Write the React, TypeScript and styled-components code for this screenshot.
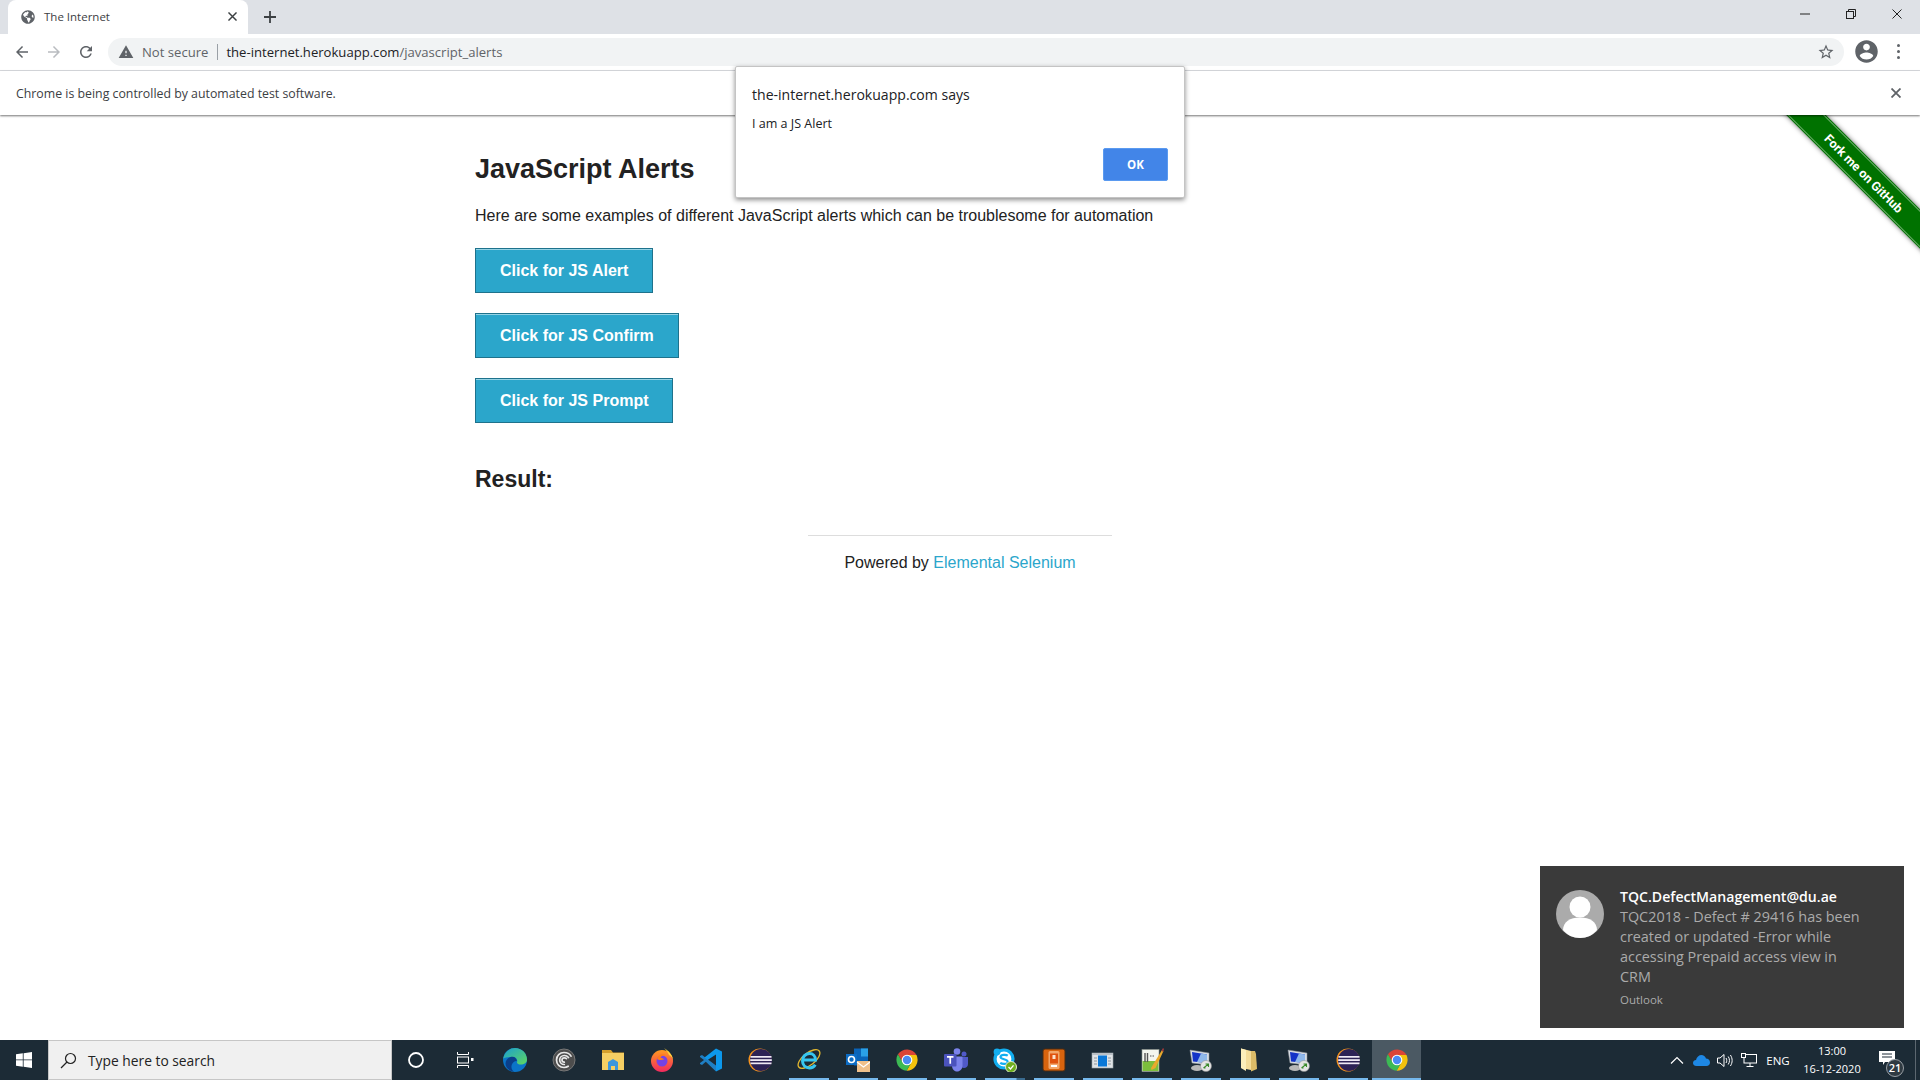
import React from "react";
import styled, { createGlobalStyle } from "styled-components";
import { FaGlobeAmericas } from "react-icons/fa";

const uiFont = `"Open Sans", "Noto Sans", sans-serif`;
const pageFont = `"Liberation Sans", Arial, sans-serif`;

const GlobalStyle = createGlobalStyle`
  html, body { margin: 0; padding: 0; background: #fff; }
  * { box-sizing: border-box; }
`;

const Screen = styled.div`
  position: relative;
  width: 1920px;
  height: 1080px;
  display: flex;
  flex-direction: column;
  overflow: hidden;
  font-family: ${uiFont};
`;

/* ---- browser chrome ---- */
const TabStrip = styled.div`
  height: 34px;
  flex: none;
  background: #dee1e6;
  display: flex;
  align-items: stretch;
  padding-left: 8px;
`;
const Tab = styled.div`
  width: 240px;
  background: #fff;
  border-radius: 8px 8px 0 0;
  display: flex;
  align-items: center;
  padding: 0 11px 1px 13px;
  color: #3c4043;
  font-size: 11.5px;
`;
const TabTitle = styled.span`
  margin-left: 9px;
  flex: 1;
`;
const NewTab = styled.div`
  width: 44px;
  display: flex;
  align-items: center;
  justify-content: center;
`;
const WindowControls = styled.div`
  margin-left: auto;
  display: flex;
  align-items: flex-start;
`;
const WindowButton = styled.div`
  width: 46px;
  height: 28px;
  display: flex;
  align-items: center;
  justify-content: center;
`;
const Toolbar = styled.div`
  height: 37px;
  flex: none;
  background: #fff;
  border-bottom: 1px solid #dadce0;
  display: flex;
  align-items: center;
  padding: 0 0 1px 0;
`;
const NavButton = styled.div`
  width: 32px;
  height: 32px;
  display: flex;
  align-items: center;
  justify-content: center;
`;
const NavGroup = styled.div`
  display: flex;
  padding-left: 6px;
  width: 108px;
`;
const Omnibox = styled.div`
  width: 1736px;
  height: 28px;
  border-radius: 14px;
  background: #f1f3f4;
  display: flex;
  align-items: center;
  padding: 0 9px 0 10px;
  font-size: 13.1px;
`;
const NotSecure = styled.span`
  color: #5f6368;
  margin-left: 8px;
`;
const Divider = styled.span`
  width: 1px;
  height: 16px;
  background: #9aa0a6;
  margin: 0 8px 0 9px;
`;
const Url = styled.span`
  color: #202124;
`;
const UrlPath = styled.span`
  color: #5f6368;
`;
const StarSlot = styled.div`
  margin-left: auto;
  display: flex;
`;
const ToolbarEnd = styled.div`
  flex: 1;
  display: flex;
  align-items: center;
  padding-left: 9px;
`;
const MenuDots = styled.div`
  margin-left: 17px;
  display: flex;
  flex-direction: column;
  gap: 3px;
`;
const MenuDot = styled.span`
  width: 3px;
  height: 3px;
  border-radius: 50%;
  background: #5f6368;
`;
const InfoBar = styled.div`
  position: relative;
  z-index: 2;
  height: 44px;
  flex: none;
  background: #fff;
  box-shadow: 0 1px 2px rgba(0, 0, 0, 0.55);
  display: flex;
  align-items: center;
  justify-content: space-between;
  padding: 0 19px 0 16px;
  color: #3c4043;
  font-size: 12.33px;
`;

/* ---- the web page ---- */
const Page = styled.main`
  position: relative;
  flex: 1;
  overflow: hidden;
  background: #fff;
  font-family: ${pageFont};
  color: #222;
`;
const Container = styled.div`
  width: 970px;
  margin: 0 auto;
  padding-top: 38px;
`;
const Heading = styled.h3`
  margin: 0;
  font-size: 27px;
  line-height: 32px;
  font-weight: 700;
`;
const Intro = styled.p`
  margin: 19px 0 20px;
  font-size: 16px;
  line-height: 24px;
`;
const ButtonList = styled.div`
  display: flex;
  flex-direction: column;
  align-items: flex-start;
  gap: 20px;
`;
const AlertButton = styled.button`
  height: 45px;
  padding: 0 24px;
  background: #2ba6cb;
  border: 1px solid #1e728c;
  box-shadow: inset 0 1px 0 rgba(255, 255, 255, 0.5);
  color: #fff;
  font-family: ${pageFont};
  font-size: 16px;
  font-weight: 700;
`;
const ResultTitle = styled.h4`
  margin: 41px 0 41px;
  font-size: 23px;
  line-height: 30px;
  font-weight: 700;
`;
const FooterRule = styled.hr`
  width: 304px;
  height: 1px;
  margin: 0 auto;
  border: 0;
  background: #ddd;
`;
const Footer = styled.div`
  margin-top: 15px;
  text-align: center;
  font-size: 16px;
  line-height: 24px;
`;
const FooterLink = styled.a`
  color: #2ba6cb;
`;
const Ribbon = styled.a`
  position: absolute;
  top: 43px;
  right: -93px;
  width: 300px;
  height: 28px;
  padding-left: 3px;
  background: #007200;
  box-shadow: 0 0 5px rgba(0, 0, 0, 0.6);
  transform: rotate(45deg);
  color: #fff;
  font-family: Roboto, sans-serif;
  font-size: 12.5px;
  font-weight: 700;
  display: flex;
  align-items: center;
  justify-content: center;
  &::before {
    content: "";
    position: absolute;
    inset: 1px 0;
    border-top: 1px solid rgba(255, 255, 255, 0.4);
    border-bottom: 1px solid rgba(255, 255, 255, 0.4);
  }
`;

/* ---- overlays ---- */
const Dialog = styled.div`
  position: absolute;
  z-index: 5;
  left: 735px;
  top: 66px;
  width: 450px;
  height: 132px;
  background: #fff;
  border: 1px solid #c4c4c4;
  border-radius: 2px;
  box-shadow: 0 2px 5px rgba(0, 0, 0, 0.45);
  padding: 18px 16px 16px;
  display: flex;
  flex-direction: column;
`;
const DialogTitle = styled.div`
  font-size: 14.07px;
  line-height: 20px;
  color: #202124;
`;
const DialogMessage = styled.div`
  margin-top: 10px;
  font-size: 12.56px;
  line-height: 18px;
  color: #202124;
`;
const DialogActions = styled.div`
  margin-top: auto;
  display: flex;
  justify-content: flex-end;
`;
const OkButton = styled.button`
  width: 65px;
  height: 33px;
  background: #4285e8;
  border: 1px solid #5a9af0;
  border-radius: 2px;
  color: #fff;
  font-family: ${uiFont};
  font-size: 11.5px;
  font-weight: 700;
`;
const Toast = styled.div`
  position: absolute;
  z-index: 5;
  left: 1540px;
  top: 866px;
  width: 364px;
  height: 162px;
  background: #3a3a3a;
  padding: 21px 20px 0 16px;
  display: flex;
  align-items: flex-start;
  gap: 16px;
`;
const Avatar = styled.svg`
  flex: none;
  margin-top: 3px;
`;
const ToastText = styled.div`
  width: 275px;
`;
const ToastTitle = styled.div`
  color: #fff;
  font-size: 14.1px;
  line-height: 20px;
  font-weight: 600;
`;
const ToastBody = styled.div`
  color: #ababab;
  font-size: 14.4px;
  line-height: 20px;
`;
const ToastSource = styled.div`
  margin-top: 4px;
  color: #ababab;
  font-size: 11.5px;
  line-height: 18px;
`;

/* ---- taskbar ---- */
const Taskbar = styled.footer`
  height: 40px;
  flex: none;
  background: #1c2b36;
  display: flex;
  align-items: stretch;
  color: #fff;
`;
const StartButton = styled.div`
  width: 48px;
  display: flex;
  align-items: center;
  justify-content: center;
`;
const SearchBox = styled.div`
  width: 344px;
  background: #f0f0f0;
  border: 1px solid #c6c6c6;
  display: flex;
  align-items: center;
  padding-left: 11px;
  color: #222;
  font-size: 13.8px;
`;
const SearchLabel = styled.span`
  margin-left: 11px;
`;
const ShellItem = styled.div`
  width: 49px;
  padding-right: 2px;
  display: flex;
  align-items: center;
  justify-content: center;
`;
const TaskItem = styled.div<{ $open?: boolean; $active?: boolean; $stacked?: boolean }>`
  position: relative;
  width: 49px;
  display: flex;
  align-items: center;
  justify-content: center;
  background: ${(p) => (p.$active ? "#4b5963" : "transparent")};
  &::after {
    content: "";
    display: ${(p) => (p.$open ? "block" : "none")};
    position: absolute;
    bottom: 0;
    left: ${(p) => (p.$active ? "0" : "4.5px")};
    right: ${(p) => (p.$active ? "0" : "4.5px")};
    height: 2px;
    background: ${(p) =>
      p.$stacked ? "linear-gradient(to right, #76b9ed 0 31px, #3a6b90 32px)" : "#76b9ed"};
  }
`;
const Tray = styled.div`
  margin-left: auto;
  display: flex;
  align-items: center;
`;
const TraySlot = styled.div`
  width: 24px;
  display: flex;
  justify-content: center;
`;
const Lang = styled.div`
  width: 34px;
  text-align: center;
  font-size: 11.5px;
`;
const Clock = styled.div`
  width: 68px;
  margin-left: 3px;
  text-align: center;
  font-size: 11px;
  line-height: 18px;
  white-space: nowrap;
`;
const NotifyWrap = styled.div`
  position: relative;
  width: 42px;
  height: 40px;
  padding-bottom: 4px;
  display: flex;
  align-items: center;
  justify-content: center;
`;
const NotifyBadge = styled.span`
  position: absolute;
  left: 20px;
  top: 19px;
  width: 18px;
  height: 18px;
  border-radius: 50%;
  background: #2f3a42;
  border: 1px solid #9aa0a6;
  font-size: 11px;
  font-weight: 600;
  line-height: 15px;
  text-align: center;
`;
const ShowDesktop = styled.div`
  align-self: stretch;
  width: 1px;
  margin: 0 4px 0 7px;
  background: #5c6770;
`;

/* ---- icons ---- */
function Mat({ d, size = 18, fill = "#5f6368" }: { d: string; size?: number; fill?: string }) {
  return (
    <svg width={size} height={size} viewBox="0 0 24 24">
      <path d={d} fill={fill} />
    </svg>
  );
}
const backPath = "M20 11H7.83l5.59-5.59L12 4l-8 8 8 8 1.41-1.41L7.83 13H20v-2z";
const forwardPath = "M4 11h12.17l-5.59-5.59L12 4l8 8-8 8-1.41-1.41L16.17 13H4v-2z";
const reloadPath = "M17.65 6.35C16.2 4.9 14.21 4 12 4c-4.42 0-7.99 3.58-7.99 8s3.57 8 7.99 8c3.73 0 6.84-2.55 7.73-6h-2.08c-.82 2.33-3.04 4-5.65 4-3.31 0-6-2.69-6-6s2.69-6 6-6c1.66 0 3.14.69 4.22 1.78L13 11h7V4l-2.35 2.35z";
const warnPath = "M1 21h22L12 2 1 21zm12-3h-2v-2h2v2zm0-4h-2v-4h2v4z";
const starPath = "M22 9.24l-7.19-.62L12 2 9.19 8.63 2 9.24l5.46 4.73L5.82 21 12 17.27 18.18 21l-1.63-7.03L22 9.24zM12 15.4l-3.76 2.27 1-4.28-3.32-2.88 4.38-.38L12 6.1l1.71 4.04 4.38.38-3.32 2.88 1 4.28L12 15.4z";
const accountPath = "M12 2C6.48 2 2 6.48 2 12s4.48 10 10 10 10-4.48 10-10S17.52 2 12 2zm0 3c1.66 0 3 1.34 3 3s-1.34 3-3 3-3-1.34-3-3 1.34-3 3-3zm0 14.2c-2.5 0-4.71-1.28-6-3.22.03-1.99 4-3.08 6-3.08 1.99 0 5.97 1.09 6 3.08-1.29 1.94-3.5 3.22-6 3.22z";

function Cross({ size = 10, color = "#3c4043", width = 1.6 }: { size?: number; color?: string; width?: number }) {
  return (
    <svg width={size} height={size} viewBox="0 0 10 10">
      <path d="M0.5 0.5 9.5 9.5M9.5 0.5 0.5 9.5" stroke={color} strokeWidth={width} fill="none" />
    </svg>
  );
}

function Ico({ children }: { children: React.ReactNode }) {
  return (
    <svg width="24" height="24" viewBox="0 0 24 24">
      {children}
    </svg>
  );
}

const EdgeIcon = () => (
  <Ico>
    <defs>
      <linearGradient id="edgeTop" x1="0" y1="0" x2="1" y2="1">
        <stop offset="0" stopColor="#1b9fd0" />
        <stop offset="1" stopColor="#5fd85f" />
      </linearGradient>
    </defs>
    <circle cx="12" cy="12" r="12" fill="#0b74c8" />
    <path d="M0.2 10.5C1.5 4 6.5 0 12 0c6.5 0 12 5 12 11.5 0 3.5-3 5-6 5-2.5 0-4.5-1-4-2.5 1-2.5-1-5-4.5-5C5 9 2 9.5 0.2 10.5z" fill="url(#edgeTop)" />
    <path d="M9.5 8.8c-4 0-7 3-7 6.7 0 4 3.5 7.5 8.5 8.2-2.5-1.7-3.2-5-2-7.5 1-2 3-3.5 5-3-.5-2.5-2-4.4-4.5-4.4z" fill="#0a3f8a" />
  </Ico>
);
const CcIcon = () => (
  <Ico>
    <circle cx="12" cy="12" r="11" fill="#4d4d4d" stroke="#777" strokeWidth="1" />
    <g fill="none" stroke="#e8e8e8" strokeWidth="1.7" strokeLinecap="round">
      <path d="M19 8.2C17.5 5.5 14.9 4.5 12 4.5 7.8 4.5 4.5 7.8 4.5 12s3.3 7.5 7.5 7.5c1.5 0 3-.4 4.2-1.3" />
      <path d="M16.5 9.5C15.5 8.2 14 7.5 12.3 7.5 9.7 7.5 7.7 9.5 7.7 12s2 4.5 4.6 4.5" />
      <path d="M14.5 10.7c-.6-.6-1.4-.9-2.2-.9-1.3 0-2.3 1-2.3 2.2s1 2.2 2.3 2.2" />
    </g>
  </Ico>
);
const FolderIcon = () => (
  <Ico>
    <path d="M1 2h9l2 2.5h11V6H1z" fill="#d6a02c" />
    <rect x="1" y="5" width="22" height="17" fill="#f6cf63" />
    <path d="M7 14l5-3 5 3v8h-3v-4h-4v4H7z" fill="#3d97dd" />
  </Ico>
);
const FirefoxIcon = () => (
  <Ico>
    <defs>
      <linearGradient id="ffBody" x1="0" y1="0" x2="0" y2="1">
        <stop offset="0" stopColor="#ff9a1f" />
        <stop offset="1" stopColor="#f2295f" />
      </linearGradient>
    </defs>
    <circle cx="12" cy="13" r="11" fill="url(#ffBody)" />
    <path d="M14 0c5 3 9 7 9 13 0-3-2-5-4-6-1-3-3-5-5-7z" fill="#ffd23e" />
    <circle cx="12" cy="13" r="5.5" fill="#7542e5" />
    <path d="M7 11c1-4 5-6 9-4-3 0-5 1-5.5 3 2 0 3 .5 3.5 1.5-2 .5-5 1-7-.5z" fill="#ff7a1a" />
  </Ico>
);
const VsCodeIcon = () => (
  <Ico>
    <polygon points="17,23.5 6.8,13.8 3,17 1,16 1,15 5,12 1,9 1,8 3,7 17,17.5" fill="#1f7fc4" />
    <polygon points="17,0.5 23,3.4 23,20.6 17,23.5 17,6.5 8.5,12 5.5,9.5" fill="#0c98ec" />
  </Ico>
);
const EclipseIcon = () => (
  <Ico>
    <circle cx="12" cy="12" r="11.5" fill="#f7941e" />
    <circle cx="13" cy="12" r="11" fill="#2c2255" />
    <rect x="2.5" y="8" width="21" height="1.7" fill="#efeaf5" />
    <rect x="2.2" y="11.2" width="21.6" height="1.8" fill="#efeaf5" />
    <rect x="2.5" y="14.5" width="21" height="1.7" fill="#efeaf5" />
  </Ico>
);
const IeIcon = () => (
  <Ico>
    <ellipse cx="12" cy="11" rx="13" ry="6" transform="rotate(-38 12 11)" fill="none" stroke="#e5b92f" strokeWidth="1.3" />
    <path d="M6.5 12H18.5C18.5 8 15.8 5.5 12.5 5.5 8.5 5.5 5.5 8.8 5.5 12.8 5.5 17 8.5 20 12.5 20c2.6 0 4.6-1.2 5.8-3.2" fill="none" stroke="#37c6ef" strokeWidth="3" />
  </Ico>
);
const OutlookIcon = () => (
  <Ico>
    <rect x="8" y="0.5" width="14" height="17" fill="#0a64b8" />
    <rect x="15" y="0.5" width="7" height="8" fill="#2aa0e6" />
    <rect x="0" y="6" width="11" height="11" fill="#0c6cc4" />
    <circle cx="5.5" cy="11.5" r="3" fill="none" stroke="#fff" strokeWidth="1.6" />
    <rect x="11" y="13" width="13" height="11" fill="#f0c08a" />
    <path d="M11 14l6.5 5L24 14" fill="none" stroke="#fff" strokeWidth="1.2" />
  </Ico>
);
const ChromeIcon = () => (
  <Ico>
    <path d="M12 7H21.53A11 11 0 0 0 2.9 6.25L7.67 14.5Z" fill="#db4437" />
    <path d="M12 7H21.53A11 11 0 0 1 11.56 22.75L16.33 14.5Z" fill="#f4c20d" />
    <path d="M7.67 14.5 2.9 6.25A11 11 0 0 0 11.56 22.75L16.33 14.5Z" fill="#3cba54" />
    <circle cx="12" cy="12" r="5.3" fill="#fff" />
    <circle cx="12" cy="12" r="4.2" fill="#4a8af4" />
  </Ico>
);
const TeamsIcon = () => (
  <Ico>
    <circle cx="13" cy="3.5" r="3.3" fill="#7b83eb" />
    <circle cx="20" cy="6" r="2.5" fill="#5059c9" />
    <path d="M16.5 9H24v7c0 2.5-2 4-4 4s-3.5-1.5-3.5-3z" fill="#5059c9" />
    <path d="M8 8.5h10.5v9c0 3.5-2.5 6-5.5 6S8 21 8 17.5z" fill="#7b83eb" />
    <rect x="0" y="6" width="12.5" height="12.5" rx="1" fill="#4b53bc" />
    <path d="M3 8.8h6.5M6.25 8.8v7" stroke="#fff" strokeWidth="1.7" fill="none" />
  </Ico>
);
const SkypeIcon = () => (
  <Ico>
    <circle cx="11" cy="11" r="9" fill="#fff" stroke="#12aef0" strokeWidth="3.2" />
    <circle cx="4" cy="4" r="3.4" fill="#12aef0" />
    <circle cx="18" cy="18" r="3.4" fill="#12aef0" />
    <path d="M14.8 7.6C13.5 6.6 8 6.2 7.5 8.8c-.5 3 7.5 2 7.3 5.2-.2 2.6-5.8 2.3-7.6.9" fill="none" stroke="#12aef0" strokeWidth="2.2" />
    <circle cx="18" cy="19" r="5.5" fill="#6fae1e" stroke="#dfe8d0" strokeWidth="1" />
    <path d="M15.5 19l2 2 3-3.6" fill="none" stroke="#fff" strokeWidth="1.3" />
  </Ico>
);
const PhoneAppIcon = () => (
  <Ico>
    <rect x="1" y="1" width="22" height="22" rx="2" fill="#d8640e" stroke="#4a2a10" strokeWidth="1" />
    <rect x="6.5" y="3" width="11" height="18" rx="1.5" fill="#f2a66a" />
    <rect x="8" y="5.5" width="8" height="10" fill="#e0530f" />
    <rect x="10.5" y="7" width="3" height="4" fill="#fbe2cc" />
    <rect x="9" y="17" width="6" height="2" fill="#fff" />
  </Ico>
);
const WindowAppIcon = () => (
  <Ico>
    <rect x="1" y="5" width="21" height="15" fill="#dfe3e6" stroke="#9aa3aa" strokeWidth="0.6" />
    <rect x="1" y="5" width="21" height="2" fill="#b9c0c6" />
    <rect x="7" y="7.5" width="9" height="11" fill="#0a78d7" />
    <path d="M3 10h3M3 13h3M3 16h3M17 10h3M17 13h3M17 16h3" stroke="#8f979e" strokeWidth="1" />
  </Ico>
);
const NotepadIcon = () => (
  <Ico>
    <rect x="2" y="1.5" width="17" height="22" fill="#f4f6ee" stroke="#8c948c" strokeWidth="0.6" />
    <rect x="2.5" y="13" width="16" height="10" fill="#7cbe3c" />
    <path d="M5 5v9M7.5 5v9" stroke="#555" strokeWidth="1.4" />
    <path d="M10 8h4" stroke="#555" strokeWidth="1" strokeDasharray="1.5 1" />
    <path d="M11 20 22 2l1.5 1-8 17-4 2z" fill="#e9a92c" />
    <path d="M21.5 2.5 23 0l1 1-1 3z" fill="#a33a3a" />
  </Ico>
);
const MonitorIcon = () => (
  <Ico>
    <path d="M1 2 20 5v12L3 15z" fill="#d8dde3" stroke="#8a8f96" strokeWidth="0.5" />
    <path d="M3 4 18 6.5V15L4 13.5z" fill="#1433c8" />
    <path d="M12 5.5 18 6.5V15L8 14z" fill="#8fb8ea" />
    <ellipse cx="8" cy="20" rx="6" ry="3" fill="#b8b8b8" />
    <circle cx="17" cy="18" r="5.5" fill="#e4e4e4" stroke="#8e8e8e" strokeWidth="0.5" />
    <path d="M14.5 20l5-4M16.5 16h3v3M14.5 20h2" fill="none" stroke="#3a8a2a" strokeWidth="1.1" />
  </Ico>
);
const PaleFolderIcon = () => (
  <Ico>
    <path d="M3 0.5 13 3v19l-10-2z" fill="#f3dc9a" />
    <path d="M13 3h4l1 3 1 15-6 2.5z" fill="#dcbc68" />
    <path d="M3 0.5 8 2v21l-5-3z" fill="#fbeebb" />
  </Ico>
);

const CortanaRing = () => (
  <svg width="18" height="18" viewBox="0 0 18 18">
    <circle cx="9" cy="9" r="7" fill="none" stroke="#fff" strokeWidth="1.8" />
  </svg>
);
const TaskView = () => (
  <svg width="18" height="18" viewBox="0 0 18 18" fill="none" stroke="#fff" strokeWidth="1">
    <path d="M1.5 1v2.5h11V1M1.5 17v-2.5h11V17" />
    <rect x="1.5" y="6" width="11" height="6" />
    <rect x="15" y="7" width="2.5" height="3" fill="#fff" stroke="none" />
  </svg>
);
const WindowsLogo = () => (
  <svg width="16" height="16" viewBox="0 0 16 16" fill="#fff">
    <path d="M0 2.3 6.8 1.3V7.5H0zM7.6 1.2 16 0V7.5H7.6zM0 8.3H6.8V14.7L0 13.7zM7.6 8.3H16V16L7.6 14.8z" />
  </svg>
);
const SearchGlass = () => (
  <svg width="17" height="17" viewBox="0 0 17 17" fill="none" stroke="#222" strokeWidth="1.2">
    <circle cx="10.5" cy="6.5" r="5" />
    <path d="M7 10 1 16" />
  </svg>
);

const apps: { icon: React.ReactNode; open?: boolean; active?: boolean; stacked?: boolean }[] = [
  { icon: <EdgeIcon /> },
  { icon: <CcIcon /> },
  { icon: <FolderIcon /> },
  { icon: <FirefoxIcon /> },
  { icon: <VsCodeIcon /> },
  { icon: <EclipseIcon /> },
  { icon: <IeIcon />, open: true },
  { icon: <OutlookIcon />, open: true },
  { icon: <ChromeIcon />, open: true },
  { icon: <TeamsIcon />, open: true },
  { icon: <SkypeIcon />, open: true, stacked: true },
  { icon: <PhoneAppIcon />, open: true },
  { icon: <WindowAppIcon />, open: true },
  { icon: <NotepadIcon />, open: true },
  { icon: <MonitorIcon />, open: true },
  { icon: <PaleFolderIcon />, open: true },
  { icon: <MonitorIcon />, open: true },
  { icon: <EclipseIcon />, open: true },
  { icon: <ChromeIcon />, open: true, active: true },
];

export default function App() {
  return (
    <Screen>
      <GlobalStyle />
      <TabStrip>
        <Tab>
          <FaGlobeAmericas size={14} color="#5f6368" />
          <TabTitle>The Internet</TabTitle>
          <Cross size={9} />
        </Tab>
        <NewTab>
          <svg width="12" height="12" viewBox="0 0 12 12">
            <path d="M6 0v12M0 6h12" stroke="#3c4043" strokeWidth="1.8" />
          </svg>
        </NewTab>
        <WindowControls>
          <WindowButton>
            <svg width="10" height="10" viewBox="0 0 10 10">
              <path d="M0 5h10" stroke="#222" strokeWidth="1" />
            </svg>
          </WindowButton>
          <WindowButton>
            <svg width="10" height="10" viewBox="0 0 10 10" fill="none" stroke="#222" strokeWidth="1">
              <rect x="0.5" y="2.5" width="7" height="7" />
              <path d="M2.5 2.5V0.5H9.5V7.5H7.5" />
            </svg>
          </WindowButton>
          <WindowButton>
            <Cross size={10} color="#222" width={1} />
          </WindowButton>
        </WindowControls>
      </TabStrip>

      <Toolbar>
        <NavGroup>
          <NavButton>
            <Mat d={backPath} fill="#5f6368" />
          </NavButton>
          <NavButton>
            <Mat d={forwardPath} fill="#b9bcc0" />
          </NavButton>
          <NavButton>
            <Mat d={reloadPath} fill="#5f6368" />
          </NavButton>
        </NavGroup>
        <Omnibox>
          <Mat d={warnPath} size={16} fill="#5f6368" />
          <NotSecure>Not secure</NotSecure>
          <Divider />
          <Url>
            the-internet.herokuapp.com<UrlPath>/javascript_alerts</UrlPath>
          </Url>
          <StarSlot>
            <Mat d={starPath} size={18} fill="#5f6368" />
          </StarSlot>
        </Omnibox>
        <ToolbarEnd>
          <Mat d={accountPath} size={27} fill="#5f6368" />
          <MenuDots>
            <MenuDot />
            <MenuDot />
            <MenuDot />
          </MenuDots>
        </ToolbarEnd>
      </Toolbar>

      <InfoBar>
        <span>Chrome is being controlled by automated test software.</span>
        <Cross size={10} color="#5f6368" width={1.8} />
      </InfoBar>

      <Page>
        <Container>
          <Heading>JavaScript Alerts</Heading>
          <Intro>Here are some examples of different JavaScript alerts which can be troublesome for automation</Intro>
          <ButtonList>
            <AlertButton>Click for JS Alert</AlertButton>
            <AlertButton>Click for JS Confirm</AlertButton>
            <AlertButton>Click for JS Prompt</AlertButton>
          </ButtonList>
          <ResultTitle>Result:</ResultTitle>
          <FooterRule />
          <Footer>
            Powered by <FooterLink>Elemental Selenium</FooterLink>
          </Footer>
        </Container>
        <Ribbon>Fork me on GitHub</Ribbon>
      </Page>

      <Taskbar>
        <StartButton>
          <WindowsLogo />
        </StartButton>
        <SearchBox>
          <SearchGlass />
          <SearchLabel>Type here to search</SearchLabel>
        </SearchBox>
        <ShellItem>
          <CortanaRing />
        </ShellItem>
        <ShellItem>
          <TaskView />
        </ShellItem>
        {apps.map((a, i) => (
          <TaskItem key={i} $open={a.open} $active={a.active} $stacked={a.stacked}>
            {a.icon}
          </TaskItem>
        ))}
        <Tray>
          <TraySlot>
            <svg width="14" height="8" viewBox="0 0 14 8">
              <path d="M1 7.5 7 1.5l6 6" fill="none" stroke="#fff" strokeWidth="1.2" />
            </svg>
          </TraySlot>
          <TraySlot>
            <svg width="17" height="11" viewBox="0 0 17 11">
              <path d="M3.5 11C1 11 0 9.5 0 8c0-1.8 1.5-3 3-3 .5-3 3-5 5.5-5 2 0 3.8 1.3 4.5 3.5 2 0 4 1.500 4 4 0 2-1.500 3.500-3.500 3.500z" fill="#1e88e5" />
            </svg>
          </TraySlot>
          <TraySlot>
            <svg width="16" height="15" viewBox="0 0 16 15" fill="none" stroke="#fff" strokeWidth="1">
              <path d="M0.5 5H3L7 1.5v12L3 10H0.5z" />
              <path d="M9 5c1 1.5 1 3.5 0 5M11.2 3.5c1.700 2.500 1.700 5.500 0 8M13.400 2c2.300 3.300 2.300 7.700 0 11" />
            </svg>
          </TraySlot>
          <TraySlot>
            <svg width="16" height="14" viewBox="0 0 16 14" fill="none" stroke="#fff" strokeWidth="1">
              <rect x="3" y="1.5" width="12.5" height="8.5" />
              <path d="M9 10v3M5.5 13.5h7" />
              <rect x="0.5" y="0.5" width="4" height="4" fill="#1c2b36" />
            </svg>
          </TraySlot>
          <Lang>ENG</Lang>
          <Clock>
            13:00
            <br />
            16-12-2020
          </Clock>
          <NotifyWrap>
            <svg width="16" height="14" viewBox="0 0 16 14">
              <path d="M0 0h16v11H6l-2 3v-3H0z" fill="#fff" />
              <path d="M3 3h10M3 6h10" stroke="#1c2b36" strokeWidth="1" />
            </svg>
            <NotifyBadge>21</NotifyBadge>
          </NotifyWrap>
          <ShowDesktop />
        </Tray>
      </Taskbar>

      <Dialog>
        <DialogTitle>the-internet.herokuapp.com says</DialogTitle>
        <DialogMessage>I am a JS Alert</DialogMessage>
        <DialogActions>
          <OkButton>OK</OkButton>
        </DialogActions>
      </Dialog>

      <Toast>
        <Avatar width="48" height="48" viewBox="0 0 48 48">
          <circle cx="24" cy="24" r="24" fill="#ababab" />
          <circle cx="24" cy="17" r="10.5" fill="#fff" />
          <path d="M7 40c0-8 7-12.5 17-12.5S41 32 41 40c-4 5-10 8-17 8S11 45 7 40z" fill="#fff" />
        </Avatar>
        <ToastText>
          <ToastTitle>TQC.DefectManagement@du.ae</ToastTitle>
          <ToastBody>
            TQC2018 - Defect # 29416 has been
            <br />
            created or updated -Error while
            <br />
            accessing Prepaid access view in
            <br />
            CRM
          </ToastBody>
          <ToastSource>Outlook</ToastSource>
        </ToastText>
      </Toast>
    </Screen>
  );
}
